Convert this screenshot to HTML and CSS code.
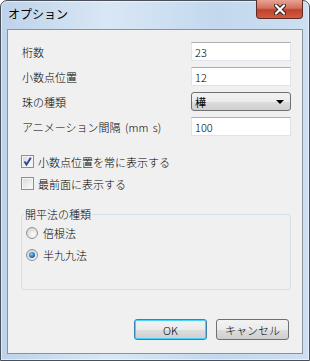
FILE: index.html
```html
<!DOCTYPE html>
<html lang="ja">
<head>
    <meta charset="UTF-8">
    <title>オプション</title>
    <link rel="stylesheet" href="styles.css">
</head>
<body>
    <div class="window">
        <div class="titlebar">
            <span class="title">オプション</span>
            <span class="close">
                <svg width="12" height="11" viewBox="0 0 12 11">
                    <path d="M2 1.5 L10 9.5 M10 1.5 L2 9.5" stroke="#3a2320" stroke-width="4.2" stroke-linecap="round"/>
                    <path d="M2 1.5 L10 9.5 M10 1.5 L2 9.5" stroke="#ffffff" stroke-width="2.2" stroke-linecap="round"/>
                </svg>
            </span>
        </div>
        <div class="client">
            <div class="row">
                <span class="label">桁数</span>
                <input class="field" type="text" value="23" readonly>
            </div>
            <div class="row">
                <span class="label">小数点位置</span>
                <input class="field" type="text" value="12" readonly>
            </div>
            <div class="row">
                <span class="label">珠の種類</span>
                <div class="select"><span class="select-text">樺</span><span class="arrow"></span></div>
            </div>
            <div class="row">
                <span class="label">アニメーション間隔 (mm s)</span>
                <input class="field" type="text" value="100" readonly>
            </div>

            <div class="check first">
                <span class="box">
                    <svg width="11" height="11" viewBox="0 0 11 11">
                        <path d="M2.5 5.5 L4.5 8.5 L8.8 1.8" fill="none" stroke="#24438f" stroke-width="1.8"/>
                    </svg>
                </span>
                小数点位置を常に表示する
            </div>
            <div class="check">
                <span class="box"></span>
                最前面に表示する
            </div>

            <fieldset class="group">
                <legend>開平法の種類</legend>
                <div class="radio first"><span class="dot"></span>倍根法</div>
                <div class="radio"><span class="dot on"></span>半九九法</div>
            </fieldset>

            <div class="buttons">
                <button class="btn default">OK</button>
                <button class="btn">キャンセル</button>
            </div>
        </div>
    </div>
</body>
</html>
```

FILE: styles.css
```css
body {
    margin: 0;
    font-family: "Noto Sans CJK JP", "Noto Sans", sans-serif;
    font-size: 11px;
    font-weight: 300;
    color: #000;
}

.window {
    width: 310px;
    height: 361px;
    box-sizing: border-box;
    border: 1px solid #49505a;
    border-radius: 7px 7px 0 0;
    padding: 0 6px 6px;
    display: flex;
    flex-direction: column;
    background: linear-gradient(to right, #bdd3ea, #d9e7f5 35%, #c3d8ee 70%, #cddff1);
    box-shadow: inset 0 0 0 1px rgba(255, 255, 255, 0.55);
}

.titlebar {
    height: 28px;
    display: flex;
    justify-content: space-between;
    align-items: flex-start;
}

.title {
    margin: 5px 0 0 1px;
    font-size: 12px;
    font-weight: 400;
    line-height: 16px;
}

.close {
    width: 47px;
    height: 19px;
    margin-top: -1px;
    box-sizing: border-box;
    border: 1px solid #5b2c24;
    border-top: none;
    border-radius: 0 0 4px 4px;
    background: linear-gradient(#e7a493, #d0705d 45%, #c0412c 55%, #d25c42);
    display: flex;
    align-items: center;
    justify-content: center;
}

.client {
    flex: 1;
    border: 1px solid #8a929c;
    background: #f0f0f0;
    padding: 12px 11px 13px 14px;
    display: flex;
    flex-direction: column;
}

.row {
    display: flex;
    justify-content: space-between;
    align-items: center;
    height: 19px;
    margin-bottom: 6px;
}

.label {
    line-height: 14px;
    word-spacing: 2px;
}

.field {
    width: 100px;
    height: 19px;
    box-sizing: border-box;
    margin: 0;
    padding: 0 3px;
    border: 1px solid #e0e3ea;
    border-top-color: #abadb3;
    background: #fff;
    font-family: inherit;
    font-size: 11px;
    font-weight: 300;
    outline: none;
}

.select {
    width: 100px;
    height: 19px;
    box-sizing: border-box;
    border: 1px solid #707070;
    border-radius: 3px;
    background: linear-gradient(#f2f2f2, #ebebeb 50%, #dddddd 51%, #cfcfcf);
    display: flex;
    justify-content: space-between;
    align-items: center;
    padding: 0 6px 0 3px;
}

.select-text {
    font-weight: 400;
}

.arrow {
    width: 0;
    height: 0;
    border-left: 4px solid transparent;
    border-right: 4px solid transparent;
    border-top: 4px solid #000;
}

.check {
    display: flex;
    align-items: center;
    height: 13px;
    margin-top: 9px;
    margin-left: -1px;
}

.check.first {
    margin-top: 13px;
}

.box {
    width: 13px;
    height: 13px;
    box-sizing: border-box;
    border: 1px solid #8e8f8f;
    background: linear-gradient(135deg, #d7d7d7, #fdfdfd);
    box-shadow: inset 0 0 0 1px #f4f4f4;
    margin-right: 4px;
    display: flex;
    align-items: center;
    justify-content: center;
}

.group {
    margin: 17px 0 0 -1px;
    padding: 0 0 0 4px;
    height: 83px;
    box-sizing: border-box;
    border: 1px solid #d5dfe5;
    border-radius: 3px;
}

.group legend {
    padding: 0 1px;
    margin-left: -2px;
    line-height: 14px;
}

.radio {
    display: flex;
    align-items: center;
    height: 16px;
    margin-top: 6px;
}

.radio.first {
    margin-top: 4px;
}

.dot {
    width: 12px;
    height: 12px;
    box-sizing: border-box;
    border-radius: 50%;
    border: 1px solid #939393;
    background: radial-gradient(circle at 60% 65%, #fefefe, #d8d8d8 70%);
    margin-right: 5px;
    display: flex;
    align-items: center;
    justify-content: center;
}

.dot.on::after {
    content: "";
    width: 6px;
    height: 6px;
    border-radius: 50%;
    background: radial-gradient(circle at 40% 35%, #8ad2f7, #1a6bb8 60%, #0c3d7a);
}

.buttons {
    margin-top: auto;
    margin-right: 2px;
    display: flex;
    justify-content: flex-end;
    gap: 9px;
}

.btn {
    width: 73px;
    height: 21px;
    margin: 0;
    padding: 0;
    border: 1px solid #707070;
    border-radius: 3px;
    background: linear-gradient(#f2f2f2, #ebebeb 50%, #dddddd 51%, #cfcfcf);
    font-family: inherit;
    font-size: 11px;
    font-weight: 300;
    color: #000;
}

.btn.default {
    border-color: #3c7fb1;
    box-shadow: inset 0 0 0 1px #48d4fa;
}
```
